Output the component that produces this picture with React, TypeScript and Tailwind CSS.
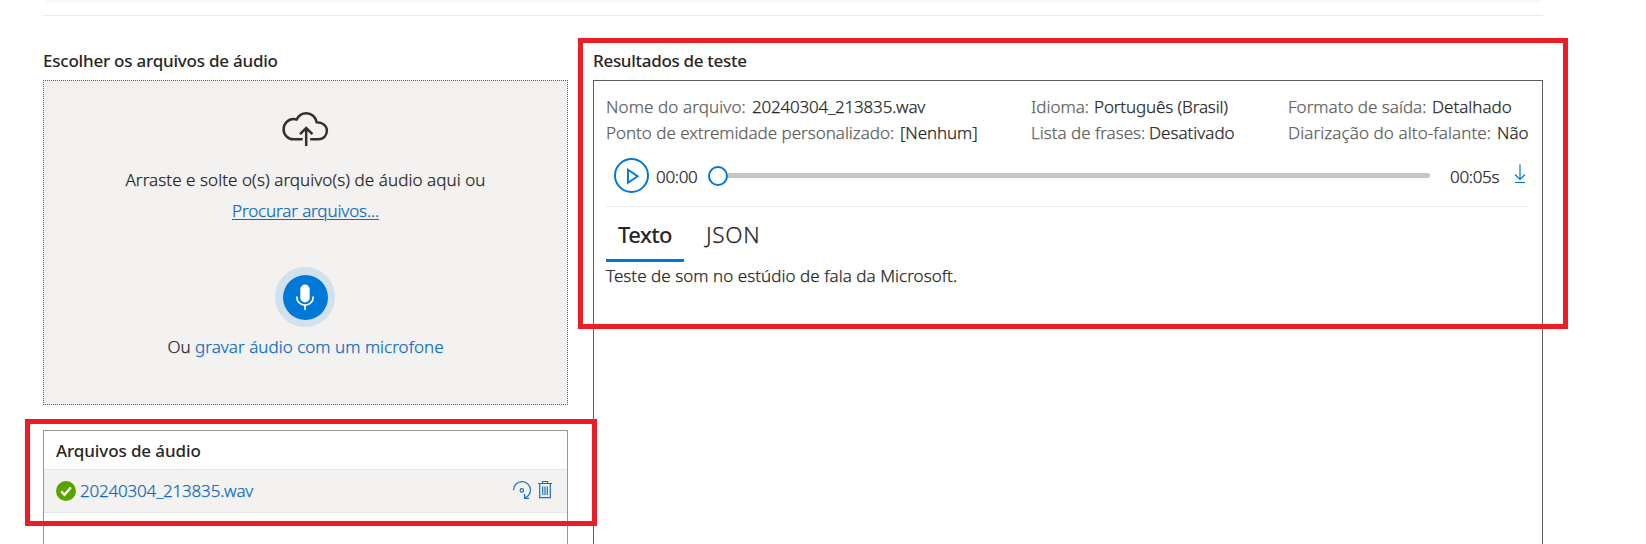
import type { ReactNode } from "react";

function Field({ label, value, labelClass, valueClass }: { label: string; value: string; labelClass: string; valueClass: string }) {
  return (
    <div className="flex h-[26px] items-center whitespace-nowrap leading-[26px]">
      <span className={`shrink-0 text-[#605e5c] ${labelClass}`}>{label}</span>
      <span className={valueClass}>{value}</span>
    </div>
  );
}

function Heading({ children, className }: { children: ReactNode; className: string }) {
  return <h2 className={`whitespace-nowrap font-medium [-webkit-text-stroke:0px] ${className}`}>{children}</h2>;
}

function CloudUploadIcon() {
  return (
    <svg className="mr-[2px] h-[36px] w-[48px]" viewBox="0 0 48 36" fill="none" stroke="#323130" strokeWidth="2.5">
      <path d="M21.7 28.3H12.6C6.8 28.3 2.6 23.7 2.6 18.2S6.9 8 12.6 8c1.1 0 2 .1 3 .5C17.5 4.700 21 2.200 25.200 2.200c5.300 0 9.600 3.800 10.500 9.100 5.900 0 10.200 3.400 10.200 8.500 0 4.700-3.600 8.500-8.300 8.500H29.200" />
      <path d="M25.200 35V17.200M19 23.200l6.200-6.200 6.200 6.200" />
    </svg>
  );
}

function MicButton() {
  return (
    <button className="flex size-[60px] items-center justify-center rounded-full bg-[#d1e1ee]">
      <span className="flex size-[45px] items-center justify-center rounded-full bg-[#0078d7]">
        <svg className="h-[26px] w-[20px]" viewBox="0 0 20 26">
          <rect x="5.300" y="0.500" width="9.400" height="18" rx="4.700" fill="#fff" />
          <path d="M1.900 12.500v1.300a8.100 7.300 0 0 0 16.200 0v-1.300M10 21v5" fill="none" stroke="#fff" strokeWidth="1.700" />
        </svg>
      </span>
    </button>
  );
}

function CheckIcon() {
  return (
    <svg className="-mt-px size-[20px]" viewBox="0 0 20 20">
      <circle cx="10" cy="10" r="10" fill="#57a300" />
      <path d="M5.200 10.400l3.300 3.400 6.300-7.400" fill="none" stroke="#fff" strokeWidth="2.300" />
    </svg>
  );
}

function ReloadIcon() {
  return (
    <svg className="h-[20px] w-[20px]" viewBox="0 0 20 20" fill="none" stroke="#1a6fc4" strokeWidth="1.200">
      <path d="M1.500 10.200C1.500 5.200 5.300 1.600 10 1.600s8.500 3.800 8.500 8.500c0 3.500-2 6.200-5.400 7.800" />
      <path d="M12.600 14v4.300h4.500" />
      <circle cx="9.800" cy="10.400" r="1.700" />
    </svg>
  );
}

function TrashIcon() {
  return (
    <svg className="h-[20px] w-[16px]" viewBox="0 0 16 20" fill="none" stroke="#1a6fc4" strokeWidth="1.200">
      <path d="M1 3.500h14M5.500 3.500v-2h5v2M2.700 3.500v14.200h10.600V3.500" />
      <path d="M5.700 6.500v8.500M8 6.500v8.500M10.300 6.500v8.500" />
    </svg>
  );
}

function PlayIcon() {
  return (
    <svg className="size-[35px]" viewBox="0 0 35 35" fill="none" stroke="#0078d7" strokeWidth="2">
      <circle cx="17.500" cy="17.500" r="16.500" />
      <path d="M14 11.800v13l9.600-6.500z" strokeWidth="1.900" />
    </svg>
  );
}

function DownloadIcon() {
  return (
    <svg className="h-[20px] w-[12px]" viewBox="0 0 12 20" fill="none" stroke="#0078d7" strokeWidth="1.200">
      <path d="M6 0.500v15M1 10.500l5 5 5-5M1 18.500h10" />
    </svg>
  );
}

export default function App() {
  return (
    <div className="relative h-[544px] overflow-hidden bg-white font-['Noto_Sans',sans-serif] text-[17px] font-light text-[#282726] [-webkit-text-stroke:0.25px]">
      <div className="px-[43px]">
        <div className="box-content h-[15px] w-[1500px] overflow-hidden border-b border-[#eaeaea]">
          <div className="mx-[2px] -mt-[11px] h-[10px] shadow-[0_1px_5px_rgba(0,0,0,0.08)]" />
        </div>
      </div>

      <main className="flex h-[528px] gap-[25px] pl-[43px] pt-[32px]">
        <section className="flex w-[525px] flex-col">
          <Heading className="h-[32px] leading-[26px] tracking-[-0.22px]">Escolher os arquivos de áudio</Heading>

          <div className="flex h-[325px] shrink-0 flex-col items-center border border-dotted border-[#605e5c] bg-[#f3f2f1] pt-[30px]">
            <CloudUploadIcon />
            <p className="mt-[20px] h-[30px] whitespace-nowrap leading-[26px] tracking-[0.07px]">
              Arraste e solte o(s) arquivo(s) de áudio aqui ou
            </p>
            <a className="mt-[1px] h-[26px] whitespace-nowrap leading-[26px] tracking-[-0.12px] text-[#0f6cbd] underline decoration-1 underline-offset-[2px]">
              Procurar arquivos...
            </a>
            <div className="mr-[1px] mt-[43px]">
              <MicButton />
            </div>
            <p className="mt-[7px] whitespace-nowrap leading-[26px] tracking-[0.03px]">
              Ou <a className="text-[#0f6cbd]">gravar áudio com um microfone</a>
            </p>
          </div>

          <div className="mt-[25px] flex-1 border border-b-0 border-[#979593]">
            <Heading className="h-[38px] pl-[12px] leading-[40px] tracking-[-0.1px]">Arquivos de áudio</Heading>
            <div className="flex h-[44px] items-center border-y border-[#e8e7e6] bg-[#f3f2f1] pl-[12px] pr-[14px]">
              <CheckIcon />
              <a className="ml-[4px] whitespace-nowrap leading-[26px] tracking-[-0.19px] text-[#0f6cbd]">20240304_213835.wav</a>
              <div className="-mt-[3px] ml-auto flex gap-[5px]">
                <ReloadIcon />
                <TrashIcon />
              </div>
            </div>
          </div>
        </section>

        <section className="flex w-[950px] flex-col">
          <Heading className="h-[32px] leading-[26px] tracking-[-0.3px]">Resultados de teste</Heading>

          <div className="flex-1 border border-b-0 border-[#605e5c] pl-[12px] pr-[13px] pt-[13px]">
            <div className="grid grid-cols-[425px_257px_1fr]">
              <Field label="Nome do arquivo:" value="20240304_213835.wav" labelClass="w-[146px] tracking-[0.12px]" valueClass="tracking-[-0.19px]" />
              <Field label="Idioma:" value="Português (Brasil)" labelClass="w-[63px]" valueClass="tracking-[-0.13px]" />
              <Field label="Formato de saída:" value="Detalhado" labelClass="w-[144px]" valueClass="" />
              <Field label="Ponto de extremidade personalizado:" value="[Nenhum]" labelClass="w-[294px] tracking-[-0.02px]" valueClass="tracking-[-0.1px]" />
              <Field label="Lista de frases:" value="Desativado" labelClass="w-[118px]" valueClass="" />
              <Field label="Diarização do alto-falante:" value="Não" labelClass="w-[209px] tracking-[0.1px]" valueClass="" />
            </div>

            <div className="flex h-[61px] items-center border-b border-[#eaeaea] pl-[8px]">
              <div className="-mt-[1px]">
                <PlayIcon />
              </div>
              <span className="ml-[7px] mt-[1px] w-[52px] tracking-[-0.3px]">00:00</span>
              <div className="flex w-[722px] items-center">
                <span className="size-[20px] shrink-0 rounded-full border-2 border-[#0078d7] bg-white" />
                <span className="-mt-[1px] h-[5px] flex-1 rounded-r-full bg-[#c8c6c4]" />
              </div>
              <span className="ml-[20px] mt-[1px] w-[64px] tracking-[-0.3px]">00:05s</span>
              <div className="-mt-[4px]">
                <DownloadIcon />
              </div>
            </div>

            <div className="flex h-[55px] text-[22px] leading-[55px]">
              <div className="flex h-[55px] w-[78px] justify-center border-b-[3px] border-[#0078d7] font-medium tracking-[-0.6px] [-webkit-text-stroke:0px]">Texto</div>
              <div className="ml-[22px] text-[22.5px] tracking-[0.7px]">JSON</div>
            </div>
            <p className="mt-[1px] whitespace-nowrap leading-[26px] tracking-[0.05px]">Teste de som no estúdio de fala da Microsoft.</p>
          </div>
        </section>
      </main>

      <div className="pointer-events-none absolute left-[578px] top-[38px] h-[291px] w-[990px] border-[5px] border-[#ee1c24]" />
      <div className="pointer-events-none absolute left-[25px] top-[419px] h-[107px] w-[572px] border-[5px] border-[#ee1c24]" />
    </div>
  );
}
